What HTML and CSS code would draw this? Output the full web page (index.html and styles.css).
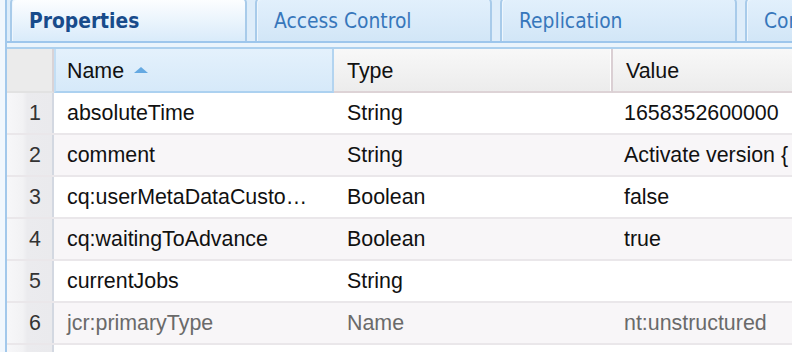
FILE: index.html
```html
<!DOCTYPE html>
<html>
<head>
<meta charset="utf-8">
<link rel="stylesheet" href="styles.css">
</head>
<body>
<div class="page">
  <div class="panel">
    <div class="tabstrip">
      <div class="tab active">Properties</div>
      <div class="tab">Access Control</div>
      <div class="tab">Replication</div>
      <div class="tab">Console</div>
    </div>
    <div class="spacer"></div>
    <div class="grid">
      <div class="row head">
        <div class="cell num"></div>
        <div class="cell name sorted">Name<span class="arrow"></span></div>
        <div class="cell type">Type</div>
        <div class="cell value">Value</div>
      </div>
      <div class="row">
        <div class="cell num">1</div>
        <div class="cell name">absoluteTime</div>
        <div class="cell type">String</div>
        <div class="cell value">1658352600000</div>
      </div>
      <div class="row alt">
        <div class="cell num">2</div>
        <div class="cell name">comment</div>
        <div class="cell type">String</div>
        <div class="cell value">Activate version {</div>
      </div>
      <div class="row">
        <div class="cell num">3</div>
        <div class="cell name">cq:userMetaDataCusto…</div>
        <div class="cell type">Boolean</div>
        <div class="cell value">false</div>
      </div>
      <div class="row alt">
        <div class="cell num">4</div>
        <div class="cell name">cq:waitingToAdvance</div>
        <div class="cell type">Boolean</div>
        <div class="cell value">true</div>
      </div>
      <div class="row">
        <div class="cell num">5</div>
        <div class="cell name">currentJobs</div>
        <div class="cell type">String</div>
        <div class="cell value"></div>
      </div>
      <div class="row alt protected">
        <div class="cell num">6</div>
        <div class="cell name">jcr:primaryType</div>
        <div class="cell type">Name</div>
        <div class="cell value">nt:unstructured</div>
      </div>
      <div class="row">
        <div class="cell num"></div>
        <div class="cell name"></div>
        <div class="cell type"></div>
        <div class="cell value"></div>
      </div>
    </div>
  </div>
</div>
</body>
</html>
```

FILE: styles.css
```css
html, body {
  margin: 0;
  padding: 0;
}
body {
  width: 792px;
  height: 352px;
  overflow: hidden;
  background: #f1f7fd;
  font-family: "Liberation Sans", Arial, Helvetica, sans-serif;
}
.page {
  padding-left: 5px;
  height: 352px;
  overflow: hidden;
}
.panel {
  width: 1100px;
  height: 352px;
  border-left: 2px solid #a2c8eb;
  background: #ffffff;
}
.tabstrip {
  display: flex;
  align-items: flex-end;
  gap: 8px;
  height: 41px;
  padding-left: 3px;
  background: #deedfa;
  border-bottom: 2px solid #9dc6ec;
  overflow: hidden;
}
.tab {
  flex: 0 0 237px;
  box-sizing: border-box;
  height: 44px;
  padding: 2px 0 0 17px;
  display: flex;
  align-items: center;
  border: 2px solid #a8cbea;
  border-bottom: none;
  border-radius: 6px 6px 0 0;
  box-shadow: inset 1px 1px 0 #eef6fd;
  background: linear-gradient(#e2f0fc, #d2e6f7);
  font-family: "DejaVu Sans Condensed", "DejaVu Sans", sans-serif;
  font-stretch: condensed;
  font-size: 20.8px;
  color: #3777bb;
  white-space: nowrap;
}
.tab.active {
  background: linear-gradient(#fdfeff, #d9ebfa);
  color: #184b8b;
  font-weight: bold;
}
.spacer {
  height: 4px;
  background: #eaf4fc;
  border-bottom: 2px solid #acd0ee;
}
.grid {
  font-size: 21.4px;
  color: #111;
}
.row {
  display: flex;
  height: 40px;
  border-bottom: 2px solid #eae7ea;
  background: #ffffff;
}
.row.alt {
  background: #f8f6f8;
}
.row.protected .name,
.row.protected .type,
.row.protected .value {
  color: #6a6a6a;
}
.cell {
  box-sizing: border-box;
  display: flex;
  align-items: center;
  padding-left: 13px;
  white-space: nowrap;
  overflow: hidden;
  flex: 0 0 auto;
}
.num {
  width: 47px;
  padding: 0 11px 0 0;
  justify-content: flex-end;
  color: #333;
  background: linear-gradient(to right, #f7f7f9 0%, #f2f2f4 35%, #ebebee 45%, #eaeaed 100%);
  border-right: 2px solid #d3d8e1;
}
.name {
  width: 280px;
}
.type {
  width: 279px;
}
.value {
  width: 400px;
  padding-left: 11px;
}
.row.head {
  height: 44px;
  border-bottom: none;
  background: none;
}
.head .cell {
  padding-top: 2px;
  background: linear-gradient(#f8f8f8, #ececec);
  border-bottom: 2px solid #ddd3d6;
}
.head .value {
  padding-left: 13px;
}
.head .num {
  background: #ebebeb;
  border-right: 2px solid #d9d3d6;
  border-bottom: 2px solid #e2e2e2;
}
.head .type {
  border-right: 2px solid #dacfd3;
  box-shadow: inset -1px 0 0 #ffffff;
}
.head .sorted {
  background: linear-gradient(#e4f1fc, #d6e9f9);
  border-left: 2px solid #c3def4;
  border-right: 2px solid #b3d4f0;
  border-bottom: 2px solid #acd1f0;
  padding-left: 11px;
}
.arrow {
  display: inline-block;
  width: 0;
  height: 0;
  margin-left: 10px;
  margin-top: -2px;
  border-left: 7px solid transparent;
  border-right: 7px solid transparent;
  border-bottom: 6px solid #65a9e2;
}
```
